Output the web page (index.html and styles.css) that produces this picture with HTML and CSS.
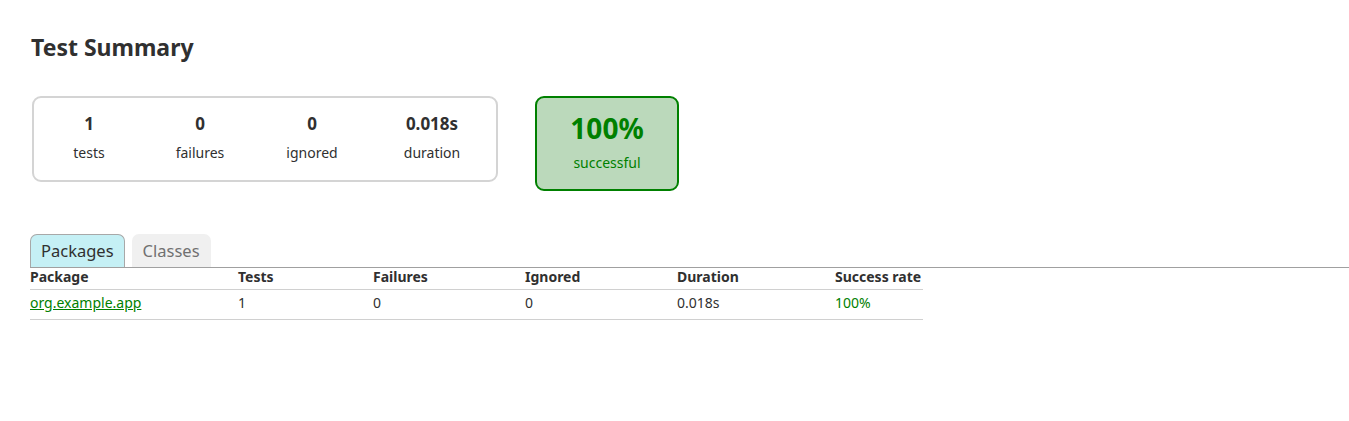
FILE: index.html
```html
<!DOCTYPE html>
<html>
<head>
<meta charset="utf-8">
<title>Test results - Test Summary</title>
<link rel="stylesheet" href="styles.css">
</head>
<body>
<div class="content">
  <h1 class="title">Test Summary</h1>
  <div class="summary">
    <div class="stats">
      <div class="stat s1"><div class="num">1</div><div class="lbl">tests</div></div>
      <div class="stat s2"><div class="num">0</div><div class="lbl">failures</div></div>
      <div class="stat s3"><div class="num">0</div><div class="lbl">ignored</div></div>
      <div class="stat s4"><div class="num">0.018s</div><div class="lbl">duration</div></div>
    </div>
    <div class="rate">
      <div class="rate-num">100%</div>
      <div class="rate-lbl">successful</div>
    </div>
  </div>
  <ul class="tabs">
    <li class="tab selected">Packages</li>
    <li class="tab">Classes</li>
  </ul>
  <table class="pkgs">
    <thead>
      <tr><th>Package</th><th>Tests</th><th>Failures</th><th>Ignored</th><th>Duration</th><th>Success rate</th></tr>
    </thead>
    <tbody>
      <tr><td><a href="#" class="pkg-link">org.example.app</a></td><td>1</td><td>0</td><td>0</td><td>0.018s</td><td class="ok">100%</td></tr>
    </tbody>
  </table>
</div>
</body>
</html>
```

FILE: styles.css
```css
html, body {
  margin: 0;
  padding: 0;
  background: #ffffff;
}
body {
  font-family: "Noto Sans", "Open Sans", sans-serif;
  color: #303030;
  font-size: 14px;
}
.content {
  padding: 28px 0 0 30px;
}
.title {
  margin: 0;
  font-size: 23px;
  line-height: 38px;
  font-weight: 700;
  color: #303030;
  padding-left: 1px;
}
.summary {
  display: flex;
  align-items: flex-start;
  gap: 37px;
  margin-top: 30px;
  margin-left: 2px;
}
.stats {
  display: grid;
  grid-template-columns: 110px 112px 112px 128px;
  border: 2px solid #d4d4d4;
  border-radius: 9px;
  height: 80px;
  padding-bottom: 2px;
  align-content: center;
}
.stat {
  text-align: center;
}
.num {
  font-size: 17px;
  font-weight: 700;
  line-height: 24px;
}
.lbl {
  font-size: 14px;
  line-height: 22px;
  margin-top: 6px;
}
.rate {
  width: 140px;
  height: 88px;
  padding-bottom: 3px;
  box-sizing: content-box;
  border: 2px solid #008000;
  border-radius: 9px;
  background: #bbd9bb;
  color: #008000;
  text-align: center;
  display: flex;
  flex-direction: column;
  justify-content: center;
}
.rate-num {
  font-size: 28px;
  font-weight: 700;
  line-height: 34px;
}
.rate-lbl {
  font-size: 14px;
  line-height: 20px;
  margin-top: 8px;
}
.tabs {
  list-style: none;
  margin: 43px 0 0 0;
  padding: 0;
  display: flex;
  gap: 7px;
  border-bottom: 1px solid #a0a0a0;
}
.tab {
  font-size: 16.5px;
  line-height: 32px;
  padding: 0 10px;
  border: 1px solid transparent;
  border-bottom: none;
  border-radius: 7px 7px 0 0;
  background: #f0f0f0;
  color: #707070;
}
.tab.selected {
  background: #c5f0f5;
  border-color: #a8a8a8;
  color: #303030;
}
.pkgs {
  border-collapse: collapse;
  table-layout: fixed;
  width: 893px;
}
.pkgs th, .pkgs td {
  text-align: left;
  white-space: nowrap;
  padding: 0;
  font-size: 14px;
  vertical-align: top;
}
.pkgs th {
  font-weight: 700;
  height: 21px;
  line-height: 18px;
  border-bottom: 1px solid #d0d0d0;
}
.pkgs td {
  height: 26px;
  padding-top: 3px;
  line-height: 20px;
  border-bottom: 1px solid #d0d0d0;
}
.pkgs th:nth-child(1) { width: 208px; }
.pkgs th:nth-child(2) { width: 135px; }
.pkgs th:nth-child(3) { width: 152px; }
.pkgs th:nth-child(4) { width: 152px; }
.pkgs th:nth-child(5) { width: 158px; }
.pkgs th:nth-child(6) { width: 88px; }
.pkg-link {
  color: #008000;
  text-decoration: underline;
}
.ok {
  color: #008000;
}
```
